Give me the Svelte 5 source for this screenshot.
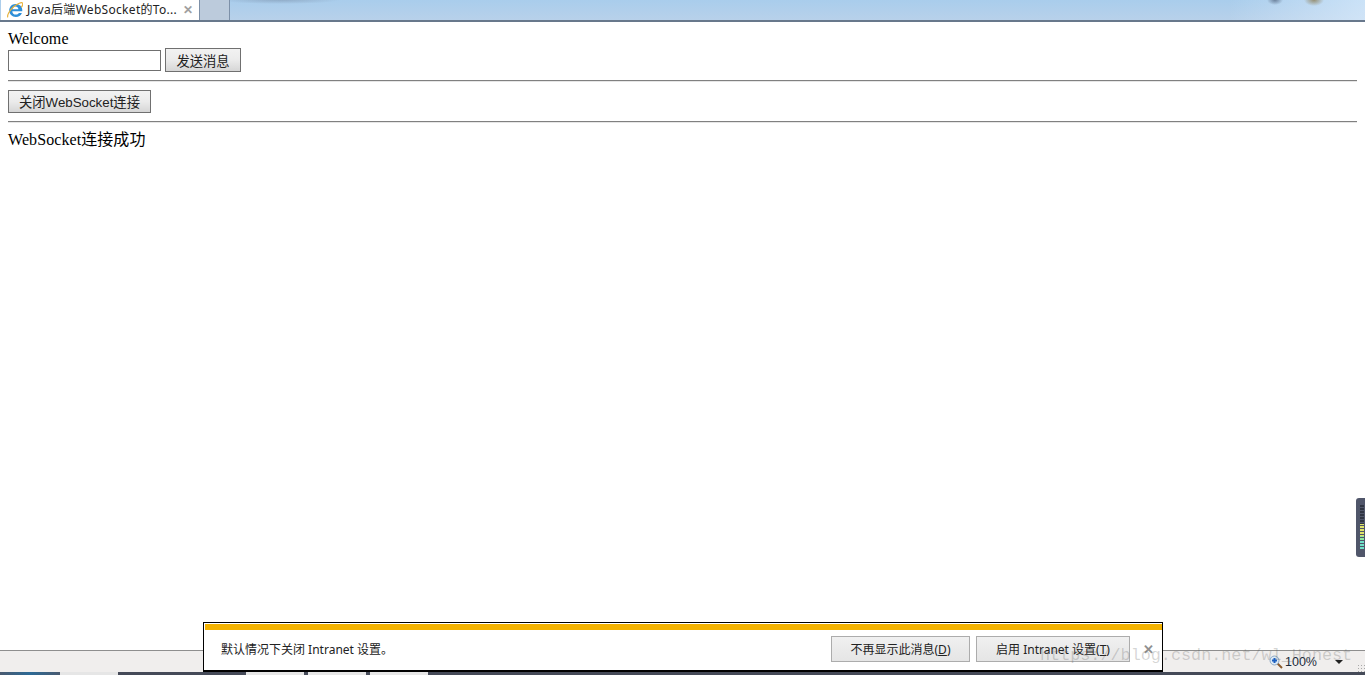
<script lang="ts">
	let message = '';
</script>

<div class="window">
	<header class="tabbar">
		<div class="tab">
			<svg class="ie-icon" viewBox="0 0 16 16" width="16" height="16" aria-hidden="true">
				<path d="M8.200 2a6.200 6.200 0 0 1 7 7.200H5.300c.1 2.100 1.500 3.400 3.500 3.400 1.400 0 2.400-.6 3-1.600h3.100c-.9 2.600-3.400 4-6 4-3.900 0-6.700-2.800-6.700-6.400 0-3.800 3-6.600 6-6.600zM5.400 7.200h6C11.300 5.500 10 4.500 8.500 4.500 7 4.500 5.700 5.500 5.400 7.200z" fill="#2f8fd8" fill-rule="evenodd" />
				<path d="M.9 15.300C-.2 13.800 2.400 8.400 6.600 4.800 10.600 1.400 14.700-.1 15.500 1.100c.6.900-.1 2.800-1.200 4.300" fill="none" stroke="#e8b23c" stroke-width="1.200" />
			</svg>
			<span class="tab-title">Java后端WebSocket的To...</span>
			<span class="tab-close">✕</span>
		</div>
		<div class="tab-new"></div>
	</header>

	<main class="page">
		<div class="welcome">Welcome</div>
		<div class="send-row">
			<input class="msg-input" type="text" bind:value={message} />
			<button class="btn send-btn">发送消息</button>
		</div>
		<hr />
		<button class="btn close-btn">关闭WebSocket连接</button>
		<hr />
		<div class="result">WebSocket连接成功</div>
	</main>

	<footer class="statusbar">
		<svg class="zoom-icon" viewBox="0 0 14 14" width="14" height="14" aria-hidden="true">
			<path d="M8.500 8.500 13 13" stroke="#8a5a2c" stroke-width="2" />
			<circle cx="5.500" cy="5.500" r="4.500" fill="#dbe9f6" stroke="#8fa9c4" />
			<path d="M5.500 3v5M3 5.500h5" stroke="#1c5fc0" stroke-width="2" />
		</svg>
		<span class="zoom-value">100%</span>
		<span class="zoom-caret"></span>
		<span class="grip"></span>
	</footer>
	<div class="taskbar">
		<span class="task start" style="width: 60px"></span>
		<span class="task light" style="width: 58px"></span>
		<span class="task dark" style="width: 128px"></span>
		<span class="task light" style="width: 58px"></span>
		<span class="task dark" style="width: 4px"></span>
		<span class="task light" style="width: 58px"></span>
		<span class="task dark" style="width: 4px"></span>
		<span class="task light" style="width: 58px"></span>
		<span class="task dark" style="flex: 1"></span>
	</div>

	<!-- floating bits over the browser chrome -->
	<div class="notice">
		<div class="notice-stripe"></div>
		<div class="notice-body">
			<span class="notice-text">默认情况下关闭 Intranet 设置。</span>
			<button class="notice-btn first">不再显示此消息(<u>D</u>)</button>
			<button class="notice-btn second">启用 Intranet 设置(<u>T</u>)</button>
			<span class="notice-close">✕</span>
		</div>
	</div>

	<div class="side-widget"></div>
	<div class="watermark">https://blog.csdn.net/wl_Honest</div>
</div>

<style>
	:global(body) {
		margin: 0;
		background: #fff;
	}

	.window {
		position: relative;
		display: flex;
		flex-direction: column;
		height: 675px;
		overflow: hidden;
		font-family: "Liberation Serif", "Noto Sans CJK SC", serif;
		font-size: 16px;
		color: #000;
	}

	.tabbar {
		display: flex;
		flex: none;
		height: 20px;
		padding-left: 1px;
		background:
			radial-gradient(ellipse 60px 4px at 280px 0, rgba(120, 140, 165, 0.5), transparent),
			radial-gradient(ellipse 8px 5px at 1275px 0, rgba(60, 75, 100, 0.6), transparent),
			radial-gradient(ellipse 10px 6px at 1314px 0, rgba(140, 125, 85, 0.8), transparent),
			linear-gradient(90deg, transparent 90%, rgba(225, 240, 255, 0.6)),
			linear-gradient(#a9cdec, #b8d1ea);
		border-bottom: 2px solid #68788c;
	}

	.tab {
		display: flex;
		align-items: center;
		width: 199px;
		height: 20px;
		box-sizing: border-box;
		padding: 0 0 1px 6px;
		background: #fff;
		border-right: 1px solid #7d90a8;
		font-family: "Noto Sans", "Noto Sans CJK SC", sans-serif;
		font-size: 12px;
		line-height: 16px;
		color: #222;
	}

	.tab-title {
		margin-left: 4px;
		letter-spacing: 0.3px;
		white-space: nowrap;
	}

	.tab-close {
		margin-left: 6px;
		font-size: 12px;
		font-weight: 700;
		color: #a0a0a0;
	}

	.ie-icon {
		flex: none;
	}

	.tab-new {
		width: 29px;
		background: #bccbdc;
		border-right: 1px solid #7d90a8;
	}

	.page {
		flex: 1;
		padding: 8px 8px 0;
	}

	.welcome,
	.result {
		letter-spacing: 0.08px;
	}

	.send-row {
		display: flex;
		align-items: center;
		gap: 4px;
		height: 24px;
	}

	.msg-input {
		width: 153px;
		height: 21px;
		box-sizing: border-box;
		margin: 0;
		padding: 0 2px;
		border: 1px solid #707070;
		background: #fff;
	}

	.btn {
		box-sizing: border-box;
		margin: 0;
		padding: 0;
		border: 1px solid #707070;
		border-radius: 0;
		background: linear-gradient(#f2f2f2, #ebebeb 50%, #d6d6d6);
		font-family: "Liberation Sans", "Noto Sans CJK SC", sans-serif;
		font-size: 13.300px;
		color: #222;
	}

	.send-btn {
		width: 76px;
		height: 24px;
	}

	.close-btn {
		display: block;
		width: 143px;
		height: 23px;
		white-space: nowrap;
	}

	hr {
		box-sizing: border-box;
		height: 2px;
		margin: 8px 0;
		border: none;
		border-top: 1px solid #808080;
		border-bottom: 1px solid #e6e6e6;
	}

	.result {
		line-height: 18px;
	}

	.statusbar {
		display: flex;
		flex: none;
		align-items: center;
		justify-content: flex-end;
		height: 21px;
		background: #f0eeed;
		border-top: 1px solid #8e8e8e;
	}

	.zoom-icon {
		margin-right: 2px;
	}

	.zoom-value {
		font-family: "Liberation Sans", sans-serif;
		font-size: 12.500px;
		color: #1a2a3a;
	}

	.zoom-caret {
		width: 0;
		height: 0;
		margin-left: 18px;
		border-left: 4px solid transparent;
		border-right: 4px solid transparent;
		border-top: 4px solid #222;
	}

	.grip {
		align-self: flex-end;
		width: 8px;
		height: 8px;
		margin-left: 14px;
		background: radial-gradient(circle, #a8a8a8 0 1px, transparent 1px) 0 0 / 3px 3px;
	}

	.taskbar {
		display: flex;
		flex: none;
		height: 3px;
	}

	.task.start {
		background: linear-gradient(90deg, #4a5a70, #2c6a96 50%, #4a5a70);
	}

	.task.dark {
		background: #454a58;
	}

	.task.light {
		background: #e6e6e6;
	}

	.notice {
		position: absolute;
		left: 203px;
		top: 622px;
		width: 960px;
		height: 50px;
		box-sizing: border-box;
		border: 1px solid #000;
		border-bottom-width: 2px;
		background: #fff;
		font-family: "Noto Sans", "Noto Sans CJK SC", sans-serif;
		font-size: 12px;
		color: #222;
	}

	.notice-stripe {
		height: 6px;
		margin: 1px 0 0 1px;
		background: #f3b200;
	}

	.notice-body {
		display: flex;
		align-items: center;
		height: 38px;
		padding-left: 17px;
	}

	.notice-text {
		flex: 1;
	}

	.notice-btn {
		height: 26px;
		box-sizing: border-box;
		margin: 0;
		padding: 0;
		border: 1px solid #acacac;
		background: linear-gradient(#f0f0f0, #e5e5e5);
		font: inherit;
		color: #222;
	}

	.notice-btn.first {
		width: 139px;
	}

	.notice-btn.second {
		width: 154px;
		margin-left: 6px;
	}

	.notice-close {
		width: 32px;
		box-sizing: border-box;
		padding-left: 4px;
		text-align: center;
		font-size: 13px;
		font-weight: 700;
		color: #909090;
	}

	.side-widget {
		position: absolute;
		right: -6px;
		top: 498px;
		width: 15px;
		height: 59px;
		border-radius: 3px;
		background:
			repeating-linear-gradient(transparent 0 2px, #50566a 2px 3px) 4px 7px / 4px 45px no-repeat,
			linear-gradient(#2f3542 0 42%, #dfe36a 42% 68%, #8fe8a0 68% 80%, #6fe0c8 80% 100%) 4px 7px / 4px 45px no-repeat,
			#50566a;
	}

	.watermark {
		position: absolute;
		left: 1040px;
		top: 646px;
		font-family: "Liberation Mono", monospace;
		font-size: 16.800px;
		white-space: nowrap;
		color: rgba(90, 90, 90, 0.25);
	}
</style>
